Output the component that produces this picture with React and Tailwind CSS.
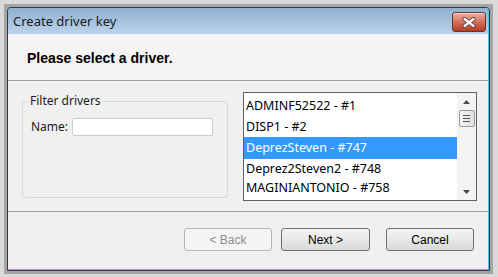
import React, { useState } from "react";

const drivers = [
    { label: "ADMINF52522 - #1", h: "h-[22px]" },
    { label: "DISP1 - #2", h: "h-[20px]" },
    { label: "DeprezSteven - #747", h: "h-[22px]" },
    { label: "Deprez2Steven2 - #748", h: "h-[20px]" },
    { label: "MAGINIANTONIO - #758", h: "h-[18px]" }
];

function CloseButton() {
    return (
        <button className="w-[34px] h-[20px] rounded-[3px] border border-[#6e3328] bg-gradient-to-b from-[#e9b0a3] via-[#d2725d] to-[#b5381f] flex items-center justify-center shadow-[inset_0_1px_0_rgba(255,255,255,0.5)]">
            <svg width="14" height="11" viewBox="0 0 14 11">
                <path d="M2.5 2 L11.5 9 M11.5 2 L2.5 9" stroke="#5a2a22" strokeWidth="4" strokeLinecap="round" />
                <path d="M2.5 2 L11.5 9 M11.5 2 L2.5 9" stroke="#ffffff" strokeWidth="2.4" strokeLinecap="round" />
            </svg>
        </button>
    );
}

function ScrollBar() {
    return (
        <div className="w-[19px] h-full bg-[#f3f3f3] flex flex-col items-center">
            <div className="h-[17px] w-full flex items-center justify-center">
                <svg width="7" height="4" viewBox="0 0 7 4"><path d="M0 4 L3.5 0 L7 4 Z" fill="#4a4a4a" /></svg>
            </div>
            <div className="w-[16px] h-[17px] rounded-[2px] border border-[#9a9a9a] bg-gradient-to-r from-[#f6f6f6] to-[#dedede] flex flex-col items-center justify-center gap-[2px]">
                <div className="w-[7px] h-px bg-[#555]" />
                <div className="w-[7px] h-px bg-[#555]" />
                <div className="w-[7px] h-px bg-[#555]" />
            </div>
            <div className="flex-1" />
            <div className="h-[17px] w-full flex items-center justify-center">
                <svg width="7" height="4" viewBox="0 0 7 4"><path d="M0 0 L7 0 L3.5 4 Z" fill="#4a4a4a" /></svg>
            </div>
        </div>
    );
}

export default function App() {
    const [name, setName] = useState("");
    const [selected, setSelected] = useState(2);

    return (
        <div className="w-[498px] h-[277px] bg-[#d9d9d9] pt-[4px] pl-[4px] pr-[5px] pb-[3px]">
            <div className="w-full h-full bg-[#a5a5a5] p-[3px]">
                <div className="w-full h-full border border-[#3a3a3a] rounded-t-[4px] overflow-hidden">
                    <div className="w-full h-full flex flex-col border-r border-b border-[#3fc6e6]">
                        <div className="h-[26px] bg-gradient-to-b from-[#8fb0d1] to-[#bcd3eb] flex justify-between items-start pl-[5px] pr-[2px]">
                            <span className="pt-[4px] text-[13px] text-[#1a1a1a] font-['Noto_Sans',sans-serif] leading-[18px]">Create driver key</span>
                            <div className="pt-[4px]">
                                <CloseButton />
                            </div>
                        </div>

                        <div className="h-[47px] bg-[#f4f4f4] flex items-center pl-[19px] border-b border-[#a0a0a0]">
                            <span className="pt-[2px] text-[14px] font-bold text-black font-['Liberation_Sans',Arial,sans-serif]">Please select a driver.</span>
                        </div>

                        <div className="flex-1 bg-[#f0f0f0] flex flex-col">
                            <div className="h-[131px] flex items-start pt-[11px] pl-[14px] border-b border-[#a0a0a0]">
                                <fieldset className="mt-[1px] w-[206px] h-[105px] border border-[#d9d9d9] rounded-[3px] pl-[8px] font-['Noto_Sans',sans-serif] text-[12px] text-[#1a1a1a]">
                                    <legend className="ml-[-2px] px-[1px] leading-[16px]">Filter drivers</legend>
                                    <div className="flex items-center mt-[9px]">
                                        <label className="w-[41px]">Name:</label>
                                        <input
                                            type="text"
                                            value={name}
                                            onChange={(e) => setName(e.target.value)}
                                            className="w-[141px] h-[18px] bg-white border border-[#c9ccd2] rounded-[2px] px-1 text-[12px] outline-none"
                                        />
                                    </div>
                                </fieldset>

                                <div className="ml-[15px] w-[234px] h-[109px] border border-[#5f5f5f] bg-white flex">
                                    <div className="flex-1 pt-[2px] overflow-hidden font-['Noto_Sans',sans-serif] text-[12.5px]">
                                        {drivers.map((d, i) => (
                                            <div
                                                key={d.label}
                                                onClick={() => setSelected(i)}
                                                className={`${d.h} flex items-center pl-[2px] ${i === selected ? "bg-[#3399ff] text-white" : "text-black"}`}
                                            >
                                                {d.label}
                                            </div>
                                        ))}
                                    </div>
                                    <ScrollBar />
                                </div>
                            </div>

                            <div className="flex-1 flex justify-end items-start pt-[16px] pr-[14px] gap-[9px] font-['Liberation_Sans',Arial,sans-serif] text-[12px]">
                                <button disabled className="w-[88px] h-[23px] rounded-[3px] border border-[#b5b8bb] bg-[#f4f4f4] text-[#8d8d8d]">&lt; Back</button>
                                <button className="w-[89px] h-[23px] rounded-[3px] border border-[#707070] bg-gradient-to-b from-[#f3f3f3] via-[#e8e8e8] to-[#d9d9d9] text-black">Next &gt;</button>
                                <button className="ml-[7px] w-[88px] h-[23px] rounded-[3px] border border-[#707070] bg-gradient-to-b from-[#f3f3f3] via-[#e8e8e8] to-[#d9d9d9] text-black">Cancel</button>
                            </div>
                        </div>
                    </div>
                </div>
            </div>
        </div>
    );
}
